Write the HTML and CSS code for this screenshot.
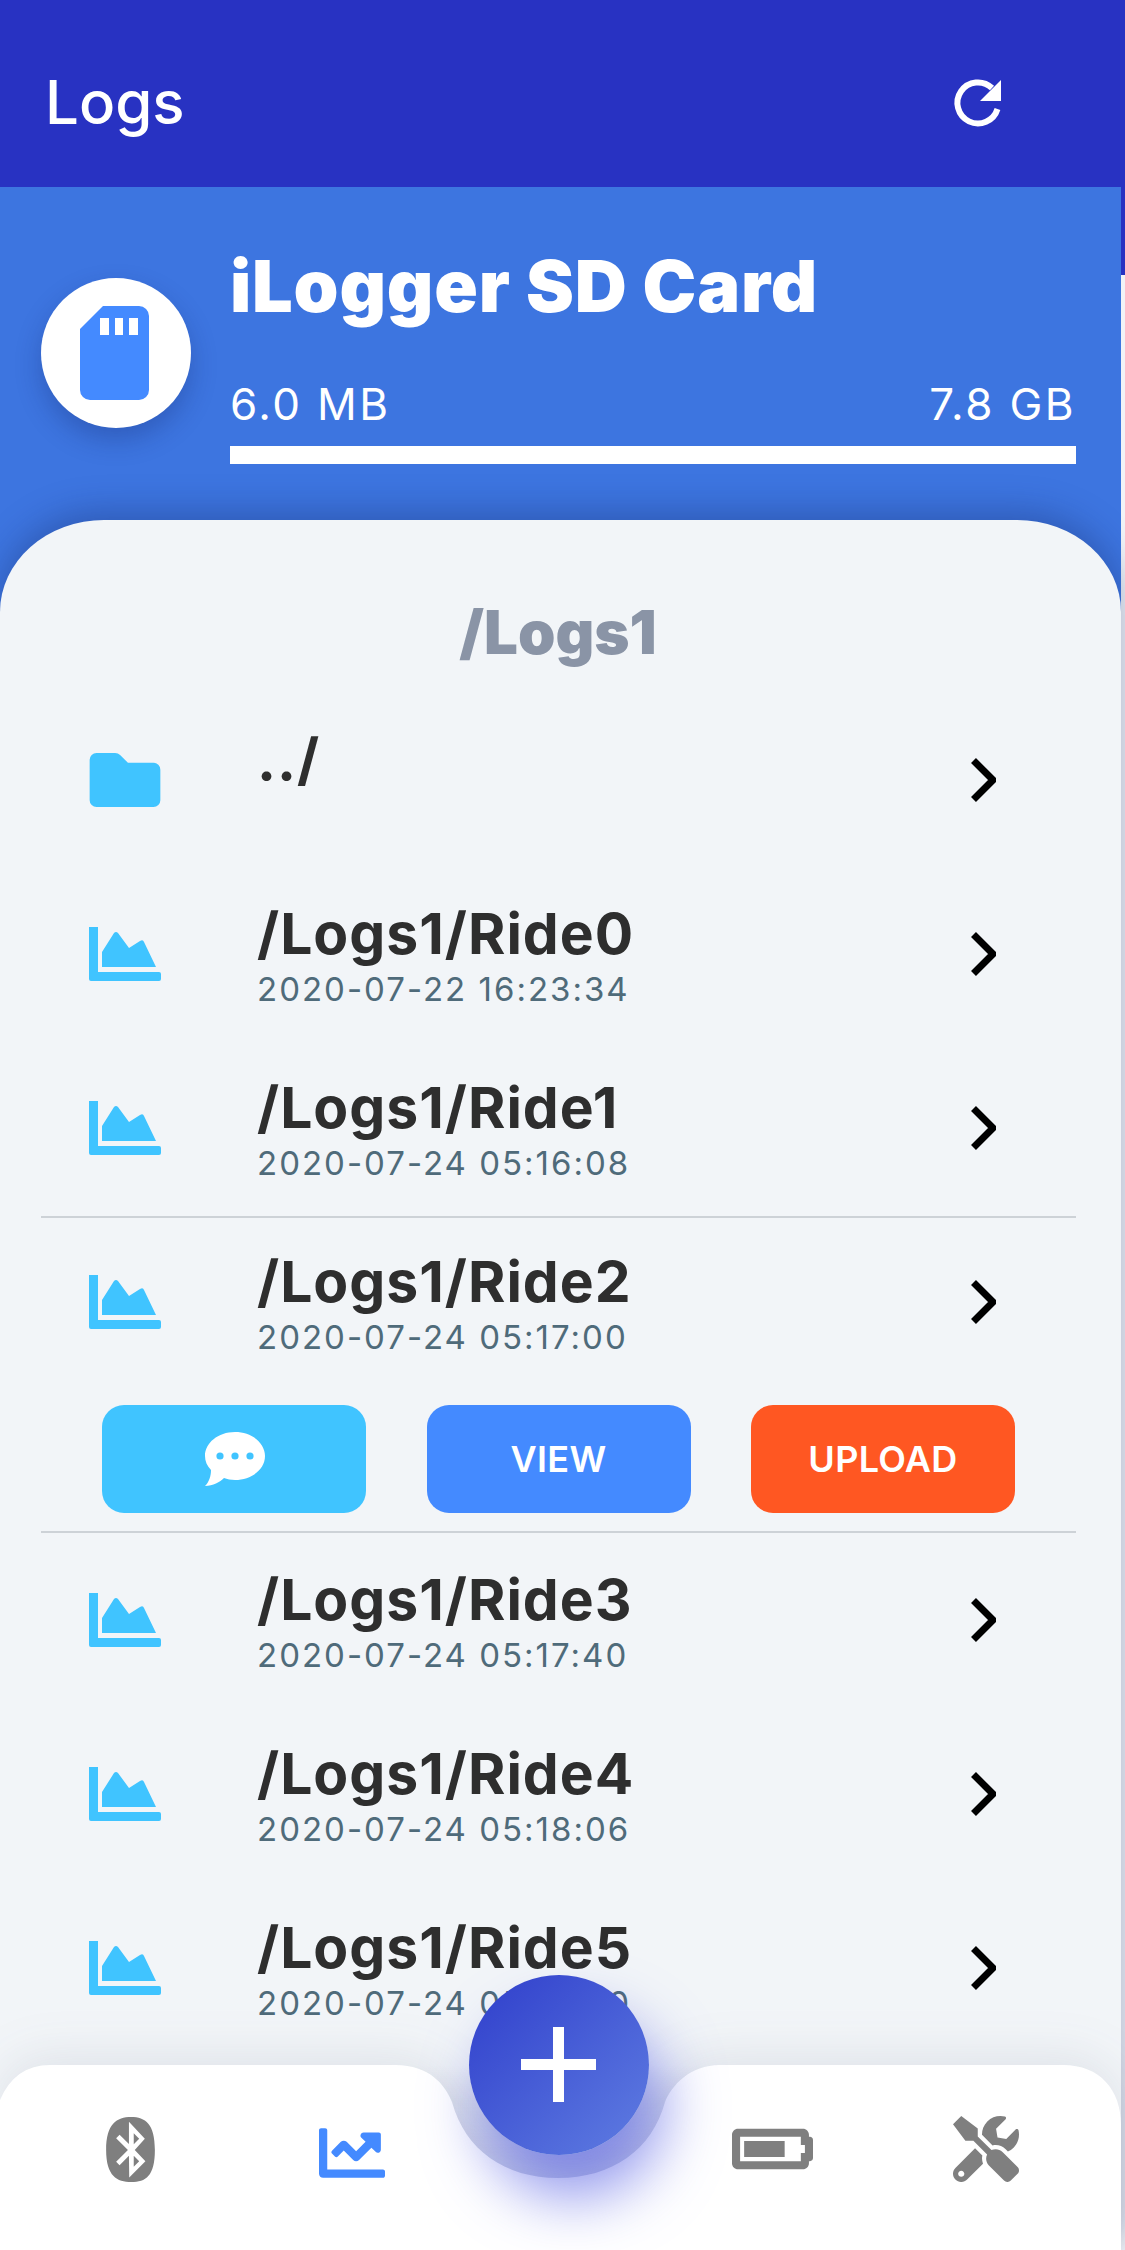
FILE: index.html
```html
<!DOCTYPE html>
<html lang="en">
<head>
<meta charset="utf-8">
<title>Logs</title>
<link rel="stylesheet" href="styles.css">
</head>
<body>
<div class="app">
  <header class="appbar">
    <h1 class="appbar-title">Logs</h1>
    <svg class="refresh" viewBox="950 75 55 55"><path d="M992 87A20.5 20.5 0 1 0 997.5 108" fill="none" stroke="#fff" stroke-width="6"/><path d="M1001 79V100H980Z" fill="#fff"/></svg>
  </header>
  <section class="storage">
    <div class="storage-badge">
      <svg class="sd-icon" viewBox="0 0 69 94"><path fill-rule="evenodd" d="M23 0H59A10 10 0 0 1 69 10V84A10 10 0 0 1 59 94H10A10 10 0 0 1 0 84V23ZM20 12V29H29V12ZM35 12V29H43V12ZM49 12V29H58V12Z" fill="#448aff"/></svg>
    </div>
    <div class="storage-info">
      <div class="storage-name">iLogger SD Card</div>
      <div class="storage-sizes"><span>6.0 MB</span><span>7.8 GB</span></div>
      <div class="storage-bar"></div>
    </div>
  </section>
  <main class="sheet">
    <h2 class="path">/Logs1</h2>
    <div class="row">
      <svg class="row-icon" viewBox="0 0 72 55"><path d="M7 0H26Q29 0 31 2L39 10H65A7 7 0 0 1 72 17V48A7 7 0 0 1 65 55H7A7 7 0 0 1 0 48V7A7 7 0 0 1 7 0Z" fill="#40c4ff"/></svg>
      <div class="row-text"><div class="row-title">../</div><div class="row-date">&nbsp;</div></div>
      <svg class="chevron" viewBox="0 0 25 44"><path d="M2.5 2.5L22 22L2.5 41.5" fill="none" stroke="#000" stroke-width="7"/></svg>
    </div>
    <div class="row">
      <svg class="row-icon" viewBox="0 0 72 54"><path d="M0 0H9V45H70Q72 45 72 47V52Q72 54 70 54H2Q0 54 0 52ZM13 40V25L25 6Q27 4 29 6L40 21L51 14Q54 12 55 15L67 40Z" fill="#40c4ff"/></svg>
      <div class="row-text"><div class="row-title">/Logs1/Ride0</div><div class="row-date">2020-07-22 16:23:34</div></div>
      <svg class="chevron" viewBox="0 0 25 44"><path d="M2.5 2.5L22 22L2.5 41.5" fill="none" stroke="#000" stroke-width="7"/></svg>
    </div>
    <div class="row">
      <svg class="row-icon" viewBox="0 0 72 54"><path d="M0 0H9V45H70Q72 45 72 47V52Q72 54 70 54H2Q0 54 0 52ZM13 40V25L25 6Q27 4 29 6L40 21L51 14Q54 12 55 15L67 40Z" fill="#40c4ff"/></svg>
      <div class="row-text"><div class="row-title">/Logs1/Ride1</div><div class="row-date">2020-07-24 05:16:08</div></div>
      <svg class="chevron" viewBox="0 0 25 44"><path d="M2.5 2.5L22 22L2.5 41.5" fill="none" stroke="#000" stroke-width="7"/></svg>
    </div>
    <div class="expanded">
      <div class="row row-open">
        <svg class="row-icon" viewBox="0 0 72 54"><path d="M0 0H9V45H70Q72 45 72 47V52Q72 54 70 54H2Q0 54 0 52ZM13 40V25L25 6Q27 4 29 6L40 21L51 14Q54 12 55 15L67 40Z" fill="#40c4ff"/></svg>
        <div class="row-text"><div class="row-title">/Logs1/Ride2</div><div class="row-date">2020-07-24 05:17:00</div></div>
        <svg class="chevron" viewBox="0 0 25 44"><path d="M2.5 2.5L22 22L2.5 41.5" fill="none" stroke="#000" stroke-width="7"/></svg>
      </div>
      <div class="actions">
        <button class="action action-note"><svg class="note-icon" viewBox="0 0 61 54"><path d="M31 0C48 0 61 11 61 24S48 48 31 48C27 48 23 47 20 46C16 50 9 54 1 54C5 50 7 44 7 38C3 34 1 29 1 24C1 11 14 0 31 0Z" fill="#fff"/><circle cx="16" cy="24" r="3.6" fill="#40c4ff"/><circle cx="31" cy="24" r="3.6" fill="#40c4ff"/><circle cx="46" cy="24" r="3.6" fill="#40c4ff"/></svg></button>
        <button class="action action-view">VIEW</button>
        <button class="action action-upload">UPLOAD</button>
      </div>
    </div>
    <div class="row">
      <svg class="row-icon" viewBox="0 0 72 54"><path d="M0 0H9V45H70Q72 45 72 47V52Q72 54 70 54H2Q0 54 0 52ZM13 40V25L25 6Q27 4 29 6L40 21L51 14Q54 12 55 15L67 40Z" fill="#40c4ff"/></svg>
      <div class="row-text"><div class="row-title">/Logs1/Ride3</div><div class="row-date">2020-07-24 05:17:40</div></div>
      <svg class="chevron" viewBox="0 0 25 44"><path d="M2.5 2.5L22 22L2.5 41.5" fill="none" stroke="#000" stroke-width="7"/></svg>
    </div>
    <div class="row">
      <svg class="row-icon" viewBox="0 0 72 54"><path d="M0 0H9V45H70Q72 45 72 47V52Q72 54 70 54H2Q0 54 0 52ZM13 40V25L25 6Q27 4 29 6L40 21L51 14Q54 12 55 15L67 40Z" fill="#40c4ff"/></svg>
      <div class="row-text"><div class="row-title">/Logs1/Ride4</div><div class="row-date">2020-07-24 05:18:06</div></div>
      <svg class="chevron" viewBox="0 0 25 44"><path d="M2.5 2.5L22 22L2.5 41.5" fill="none" stroke="#000" stroke-width="7"/></svg>
    </div>
    <div class="row">
      <svg class="row-icon" viewBox="0 0 72 54"><path d="M0 0H9V45H70Q72 45 72 47V52Q72 54 70 54H2Q0 54 0 52ZM13 40V25L25 6Q27 4 29 6L40 21L51 14Q54 12 55 15L67 40Z" fill="#40c4ff"/></svg>
      <div class="row-text"><div class="row-title">/Logs1/Ride5</div><div class="row-date">2020-07-24 05:18:40</div></div>
      <svg class="chevron" viewBox="0 0 25 44"><path d="M2.5 2.5L22 22L2.5 41.5" fill="none" stroke="#000" stroke-width="7"/></svg>
    </div>
  </main>
  <nav class="tabbar">
    <svg class="tabbar-bg" viewBox="0 0 1121 185" preserveAspectRatio="none">
      <defs><linearGradient id="notch" x1="0" y1="0" x2="0" y2="1"><stop offset="0" stop-color="#3c4678" stop-opacity="0"/><stop offset=".3" stop-color="#3c4678" stop-opacity=".07"/><stop offset="1" stop-color="#3c46b4" stop-opacity=".16"/></linearGradient></defs>
      <rect x="400" y="0" width="320" height="120" fill="url(#notch)"/>
      <path d="M0 35Q15 0 50 0H395C430 0 445 20 452 37C465 85 505 113 558 113C612 113 652 85 665 37C672 20 690 0 720 0H1063C1100 0 1121 25 1121 60V185H0Z" fill="#fff"/>
    </svg>
    <div class="tab"><svg class="tab-bt" viewBox="32 0 384 512"><path fill="#7f7f7f" d="M292.6 171.1L249.7 214l-.3-86 43.2 43.1m-43.2 219.8l43.1-43.1-42.9-42.9-.2 86zM416 259.4C416 465 344.1 512 230.9 512S32 465 32 259.4 115.4 0 228.6 0 416 53.9 416 259.4zm-158.5 0l79.4-88.6L211.8 36.5v176.9L138 139.6l-27 26.9 92.7 93-92.7 93 26.9 26.9 73.8-73.8 2.3 170 127.4-127.5-83.9-88.7z"/></svg></div>
    <div class="tab"><svg class="tab-chart" viewBox="0 64 512 384"><path fill="#448aff" d="M496 384H64V80c0-8.84-7.16-16-16-16H16C7.16 64 0 71.16 0 80v336c0 17.67 14.33 32 32 32h464c8.84 0 16-7.16 16-16v-32c0-8.84-7.16-16-16-16zM464 96H345.94c-21.38 0-32.09 25.85-16.97 40.97l32.4 32.4L288 242.75l-73.37-73.37c-12.5-12.5-32.76-12.5-45.25 0l-68.69 68.69c-6.25 6.25-6.25 16.38 0 22.63l22.62 22.62c6.25 6.25 16.38 6.25 22.63 0L192 237.25l73.37 73.37c12.5 12.5 32.76 12.5 45.25 0l96-96 32.4 32.4c15.12 15.12 40.97 4.41 40.97-16.97V112c.01-8.84-7.15-16-15.99-16z"/></svg></div>
    <div class="tab"></div>
    <div class="tab"><svg class="tab-battery" viewBox="0 96 640 320"><path fill="#7f7f7f" d="M544 160v64h32v64h-32v64H64V160h480m16-64H48c-26.51 0-48 21.49-48 48v224c0 26.51 21.49 48 48 48h512c26.51 0 48-21.49 48-48v-16h8c13.255 0 24-10.745 24-24V184c0-13.255-10.745-24-24-24h-8v-16c0-26.51-21.49-48-48-48zm-144 96H96v128h320V192z"/></svg></div>
    <div class="tab"><svg class="tab-tools" viewBox="0 0 512 512"><path fill="#7f7f7f" d="M501.1 395.7L384 278.6c-23.1-23.1-57.6-27.6-85.4-13.9L192 158.1V96L64 0 0 64l96 128h62.1l106.6 106.6c-13.6 27.8-9.2 62.3 13.9 85.4l117.1 117.1c14.6 14.6 38.2 14.6 52.7 0l52.7-52.7c14.5-14.6 14.5-38.2 0-52.7zM331.7 225c28.3 0 54.9 11 74.9 31l19.4 19.4c15.8-6.9 30.8-16.5 43.8-29.5 37.1-37.1 49.7-89.3 37.9-136.7-2.2-9-13.5-12.1-20.1-5.5l-74.4 74.4-67.9-11.3L334 98.9l74.4-74.4c6.6-6.6 3.4-17.9-5.7-20.2-47.4-11.7-99.6.9-136.6 37.9-28.5 28.5-41.9 66.1-41.2 103.6l82.1 82.1c8.1-1.9 16.5-2.9 24.7-2.9zm-103.9 82l-56.7-56.7L18.7 402.8c-25 25-25 65.5 0 90.5s65.5 25 90.5 0l123.6-123.6c-7.6-19.9-9.9-41.6-5-62.7zM64 472c-13.2 0-24-10.8-24-24 0-13.3 10.7-24 24-24s24 10.7 24 24c0 13.2-10.7 24-24 24z"/></svg></div>
  </nav>
  <button class="fab"><span class="fab-plus"></span></button>
</div>
</body>
</html>
```
FILE: styles.css
```css
* { box-sizing: border-box; }
html, body { margin: 0; padding: 0; }
body { width: 1125px; height: 2250px; overflow: hidden; background: #f2f5f8; font-family: Inter, "Liberation Sans", sans-serif; }
.app { position: relative; width: 1125px; height: 2250px; overflow: hidden; background: linear-gradient(#2832c2 0 275px, #f1f3f7 275px); }

.appbar { height: 187px; display: flex; align-items: center; justify-content: space-between; padding: 0 120px 0 45px; }
.appbar-title { margin: 16px 0 0; color: #fff; font-size: 60px; font-weight: 500; line-height: 64px; }
.refresh { width: 55px; height: 55px; margin-top: 20px; }

.storage { width: 1121px; height: 433px; background: #3d75e0; display: flex; align-items: flex-start; padding: 59px 45px 0 41px; gap: 39px; }
.storage-badge { width: 150px; height: 150px; margin-top: 32px; padding-right: 3px; flex: none; border-radius: 50%; background: #fff; display: flex; align-items: center; justify-content: center; box-shadow: 0 12px 26px rgba(20, 40, 110, .3); }
.sd-icon { width: 69px; height: 94px; }
.storage-info { flex: 1; }
.storage-name { color: #fff; font-size: 72px; line-height: 80px; font-weight: 900; letter-spacing: .8px; }
.storage-sizes { display: flex; justify-content: space-between; margin-top: 53px; color: #fff; font-size: 44px; line-height: 50px; letter-spacing: 2.4px; }
.storage-bar { height: 18px; margin-top: 17px; background: #fff; }

.sheet { position: relative; width: 1121px; height: 1730px; margin-top: -100px; padding-top: 77px; background: #f2f5f8; border-radius: 104px 104px 0 0 / 92px 92px 0 0; box-shadow: 0 -8px 34px rgba(20, 40, 100, .35); overflow: hidden; }
.path { margin: 0 5px 26px 0; text-align: center; color: #8a94a6; font-size: 60px; line-height: 70px; font-weight: 900; }

.row { height: 174px; display: flex; align-items: center; padding: 0 125px 0 89px; }
.row-open { height: 168px; }
.row-icon { width: 72px; height: 54px; flex: none; }
.row-text { flex: 1; margin: 3px 0 0 96px; }
.row-title { color: #2e2e2e; font-size: 57px; line-height: 58px; font-weight: 700; letter-spacing: 1px; }
.row-date { color: #4f6b7a; font-size: 33px; line-height: 34px; letter-spacing: 2px; margin-top: 9px; }
.chevron { width: 25px; height: 44px; flex: none; }

.expanded { margin: 1px 45px 0 41px; border-top: 2px solid #cdd2d7; border-bottom: 2px solid #cdd2d7; padding-bottom: 18px; }
.expanded .row { padding: 0 80px 0 48px; }
.actions { display: flex; justify-content: space-between; padding: 0 61px; margin-top: 19px; }
.action { width: 264px; height: 108px; border: 0; border-radius: 22px; color: #fff; font: 600 36px/1 Inter, "Liberation Sans", sans-serif; letter-spacing: .3px; padding: 0; display: flex; align-items: center; justify-content: center; }
.action-note { background: #40c4ff; }
.action-view { background: #448aff; }
.action-upload { background: #ff5722; }
.note-icon { width: 61px; height: 54px; }

.tabbar { position: absolute; left: 0; bottom: 0; width: 1121px; height: 185px; display: grid; grid-template-columns: repeat(5, 214px); padding-left: 23px; }
.tabbar-bg { position: absolute; inset: 0; width: 100%; height: 100%; filter: drop-shadow(0 -8px 24px rgba(60, 70, 100, .1)); }
.tab { position: relative; height: 168px; display: flex; align-items: center; justify-content: center; }
.tab-bt { width: 49px; height: 65px; }
.tab-chart { width: 66px; height: 50px; margin: 8px 0 0 16px; }
.tab-battery { width: 81px; height: 42px; }
.tab-tools { width: 66px; height: 66px; }

.fab { position: absolute; left: 469px; top: 1975px; width: 180px; height: 180px; padding: 0; border: 0; border-radius: 50%; background: linear-gradient(135deg, #2f3ecb, #5f7de2); box-shadow: 14px 42px 60px rgba(70, 80, 225, .6); }
.fab-plus { position: absolute; left: 52px; top: 52px; width: 75px; height: 75px; background: linear-gradient(#fff, #fff) center / 11px 100% no-repeat, linear-gradient(#fff, #fff) center / 100% 11px no-repeat; }
```
